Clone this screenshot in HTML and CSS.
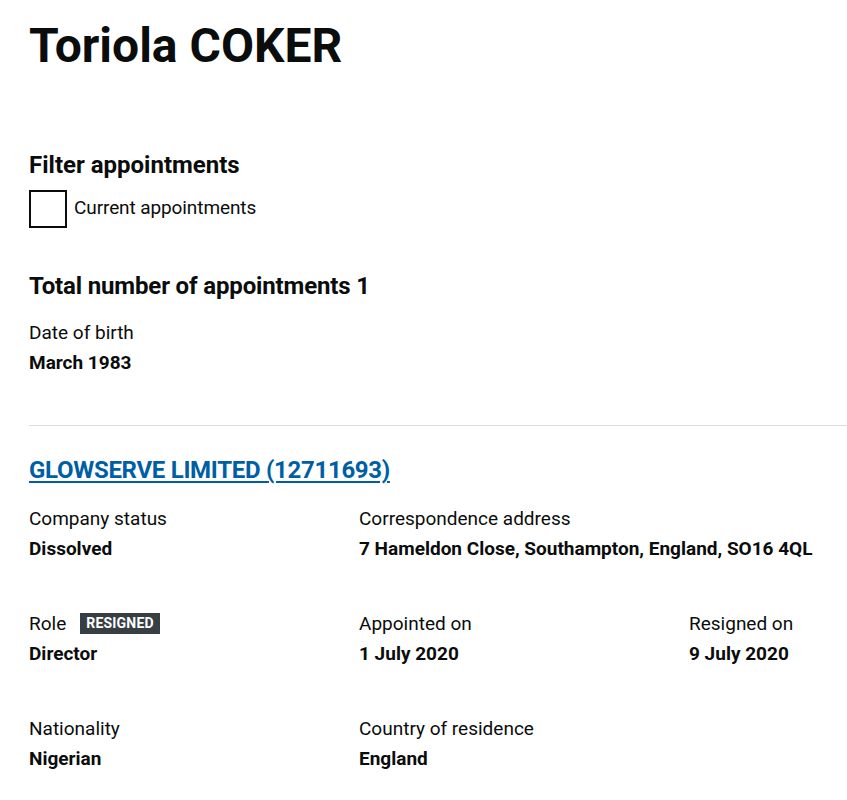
FILE: index.html
```html
<!DOCTYPE html>
<html lang="en">
<head>
<meta charset="utf-8">
<title>Toriola COKER</title>
<link rel="stylesheet" href="styles.css">
</head>
<body>
<main class="page">
  <h1 class="title">Toriola COKER</h1>

  <h2 class="heading filter-heading">Filter appointments</h2>
  <label class="checkbox">
    <span class="checkbox-box"></span>
    <span class="checkbox-label">Current appointments</span>
  </label>

  <h2 class="heading total-heading">Total number of appointments 1</h2>
  <dl class="field dob">
    <dt class="label">Date of birth</dt>
    <dd class="value">March 1983</dd>
  </dl>

  <hr class="rule">

  <section class="appointment">
    <h2 class="heading company-heading"><a class="link" href="#">GLOWSERVE LIMITED (12711693)</a></h2>
    <div class="row">
      <dl class="field">
        <dt class="label">Company status</dt>
        <dd class="value">Dissolved</dd>
      </dl>
      <dl class="field wide">
        <dt class="label">Correspondence address</dt>
        <dd class="value">7 Hameldon Close, Southampton, England, SO16 4QL</dd>
      </dl>
    </div>
    <div class="row">
      <dl class="field">
        <dt class="label">Role <span class="tag">Resigned</span></dt>
        <dd class="value">Director</dd>
      </dl>
      <dl class="field">
        <dt class="label">Appointed on</dt>
        <dd class="value">1 July 2020</dd>
      </dl>
      <dl class="field">
        <dt class="label">Resigned on</dt>
        <dd class="value">9 July 2020</dd>
      </dl>
    </div>
    <div class="row">
      <dl class="field">
        <dt class="label">Nationality</dt>
        <dd class="value">Nigerian</dd>
      </dl>
      <dl class="field">
        <dt class="label">Country of residence</dt>
        <dd class="value">England</dd>
      </dl>
    </div>
  </section>
</main>
</body>
</html>
```

FILE: styles.css
```css
html, body {
  margin: 0;
  padding: 0;
  background: #ffffff;
  overflow: hidden;
}

body {
  font-family: Roboto, "Liberation Sans", Arial, sans-serif;
  color: #0b0c0c;
  font-size: 19px;
  line-height: 25px;
}

.page {
  width: 990px;
  padding: 21px 0 40px 29px;
}

.title {
  margin: 0;
  font-size: 48px;
  line-height: 50px;
  font-weight: 700;
}

.heading {
  margin: 0;
  font-size: 24px;
  line-height: 30px;
  font-weight: 700;
}

.filter-heading {
  margin-top: 79px;
}

.checkbox {
  display: flex;
  align-items: center;
  gap: 7px;
  margin-top: 10px;
}

.checkbox-box {
  width: 34px;
  height: 34px;
  border: 2px solid #0b0c0c;
  flex: none;
}

.checkbox-label {
  padding-bottom: 3px;
  letter-spacing: -0.1px;
}

.total-heading {
  margin-top: 43px;
  letter-spacing: -0.15px;
}

.field {
  margin: 0;
}

.label {
  margin: 0;
  display: flex;
  align-items: center;
  height: 25px;
}

.value {
  margin: 5px 0 0;
  font-weight: 700;
}

.dob {
  margin-top: 19px;
}

.rule {
  margin: 50px 0 0;
  border: 0;
  border-top: 1px solid #dcdddf;
  height: 0;
}

.company-heading {
  margin-top: 29px;
}

.link {
  color: #005ea5;
  text-decoration: underline;
  text-underline-offset: 3px;
  text-decoration-thickness: 2px;
  letter-spacing: -0.3px;
}

.row {
  display: grid;
  grid-template-columns: 330px 330px 330px;
  margin-top: 50px;
}

.company-heading + .row {
  margin-top: 21px;
}

.wide {
  grid-column: span 2;
}

.tag {
  display: inline-block;
  margin-left: 14px;
  background: #383f43;
  color: #ffffff;
  font-size: 14px;
  line-height: 21px;
  font-weight: 700;
  text-transform: uppercase;
  padding: 0 6px;
  letter-spacing: 0.2px;
}
```
